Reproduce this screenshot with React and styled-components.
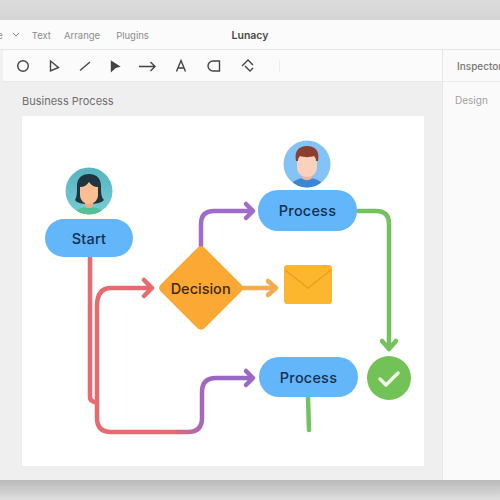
import React from 'react';
import styled, { createGlobalStyle } from 'styled-components';

const GlobalStyle = createGlobalStyle`
  html, body {
    margin: 0;
    padding: 0;
    width: 500px;
    height: 500px;
    overflow: hidden;
    background: #d8d8d8;
    font-family: Inter, "Liberation Sans", sans-serif;
  }
`;

const Page = styled.div`
  width: 500px;
  height: 500px;
  display: flex;
  flex-direction: column;
  overflow: hidden;
`;

const TopBand = styled.div`
  height: 20px;
  flex: none;
  background: linear-gradient(#dcdcdc, #d4d4d4);
`;

const BottomBand = styled.div`
  height: 20px;
  flex: none;
  background: linear-gradient(#b9b9b9, #dedede);
`;

const Window = styled.div`
  height: 460px;
  flex: none;
  display: flex;
  flex-direction: column;
  background: #fbfbfb;
`;

const MenuBar = styled.div`
  height: 28px;
  padding-top: 1px;
  flex: none;
  position: relative;
  display: flex;
  align-items: center;
  border-bottom: 1px solid #e6e6e6;
  font-size: 9.5px;
  color: #8b8b8b;
`;

const MenuList = styled.div`
  display: flex;
  align-items: center;
  margin-left: -13px;
`;

const MenuItem = styled.span`
  margin-right: ${(p) => p.$gap || 13}px;
`;

const Chevron = styled.svg`
  width: 8px;
  height: 6px;
  margin-right: 12px;
  fill: none;
  stroke: #8b8b8b;
  stroke-width: 1;
`;

const Title = styled.span`
  position: absolute;
  left: 0;
  right: 0;
  text-align: center;
  font-size: 10.5px;
  font-weight: 600;
  color: #4a4a4a;
`;

const Body = styled.div`
  flex: 1;
  min-height: 0;
  display: flex;
`;

const Main = styled.div`
  width: 442px;
  flex: none;
  display: flex;
  flex-direction: column;
`;

const Toolbar = styled.div`
  height: 31px;
  flex: none;
  display: flex;
  align-items: center;
  gap: 11.5px;
  padding-left: 10px;
  border-bottom: 1px solid #e9e9e9;
  border-left: 3px solid #f1f1f1;
`;

const Tool = styled.svg`
  width: ${(p) => p.$w || 20}px;
  height: 20px;
  flex: none;
  fill: none;
  stroke: #444;
  stroke-width: 1.4;
`;

const ToolDivider = styled.div`
  width: 1px;
  height: 12px;
  margin-left: 12px;
  background: #ececec;
`;

const Canvas = styled.div`
  flex: 1;
  min-height: 0;
  background: #efefef;
  padding: 12px 18px 13px 22px;
  display: flex;
  flex-direction: column;
  gap: 8px;
`;

const CanvasLabel = styled.div`
  font-size: 11px;
  line-height: 14px;
  color: #6e6e6e;
`;

const Paper = styled.div`
  position: relative;
  width: 402px;
  height: 350px;
  flex: none;
  background: #fff;
`;

const Wires = styled.svg`
  position: absolute;
  inset: 0;
  width: 402px;
  height: 350px;
  fill: none;
`;

const Pill = styled.div`
  position: absolute;
  left: ${(p) => p.$x}px;
  top: ${(p) => p.$y}px;
  width: ${(p) => p.$w}px;
  height: ${(p) => p.$h}px;
  display: flex;
  align-items: center;
  justify-content: center;
  border-radius: 20px;
  background: #64b6fb;
  color: #12304f;
  font-size: 14.5px;
  font-weight: 500;
  letter-spacing: 0.2px;
`;

const Diamond = styled.div`
  position: absolute;
  left: 148px;
  top: 141px;
  width: 62px;
  height: 62px;
  display: flex;
  align-items: center;
  justify-content: center;
  border-radius: 5px;
  background: #fba834;
  transform: rotate(45deg);
`;

const DiamondLabel = styled.span`
  transform: rotate(-45deg);
  color: #40290f;
  font-size: 14.5px;
  font-weight: 500;
`;

const Glyph = styled.svg`
  position: absolute;
  left: ${(p) => p.$x}px;
  top: ${(p) => p.$y}px;
  width: ${(p) => p.$w}px;
  height: ${(p) => p.$h}px;
`;

const Inspector = styled.aside`
  flex: 1;
  display: flex;
  flex-direction: column;
  border-left: 1px solid #e8e8e8;
  background: #fafafa;
`;

const InspectorHead = styled.div`
  height: 31px;
  flex: none;
  display: flex;
  align-items: center;
  padding-left: 14px;
  border-bottom: 1px solid #ebebeb;
  font-size: 10px;
  font-weight: 500;
  color: #777;
  white-space: nowrap;
`;

const InspectorLabel = styled.div`
  padding: 12px 0 0 12px;
  font-size: 10px;
  color: #a2a2a2;
`;

const Woman = (
  <Glyph $x={43} $y={51} $w={48} $h={48} viewBox="0 0 48 48">
    <defs>
      <clipPath id="womanClip"><circle cx="24" cy="24" r="23.5" /></clipPath>
      <linearGradient id="womanBg" x1="0" y1="0" x2="0" y2="1">
        <stop offset="0" stopColor="#56b3bf" />
        <stop offset="1" stopColor="#78cdd6" />
      </linearGradient>
    </defs>
    <g clipPath="url(#womanClip)">
      <rect width="48" height="48" fill="url(#womanBg)" />
      <path d="M9 48c1-6 8-8 15-8s14 2 15 8z" fill="#55c096" />
      <path d="M10 33c2-3 2-8 2-14C12 11 17 7 24 7s12 4 12 12c0 6 0 11 3 14-3 3-8 4-15 4s-12-1-14-4z" fill="#1f3540" />
      <rect x="20" y="30" width="8" height="11" rx="3" fill="#f0ab85" />
      <path d="M15 20c4 0 7-2 9-5 2 3 5 5 9 5v8c0 5-4 9-9 9s-9-4-9-9z" fill="#fbbd92" />
    </g>
  </Glyph>
);

const Man = (
  <Glyph $x={261} $y={24} $w={48} $h={48} viewBox="0 0 48 48">
    <defs>
      <clipPath id="manClip"><circle cx="24" cy="24" r="23.5" /></clipPath>
    </defs>
    <g clipPath="url(#manClip)">
      <rect width="48" height="48" fill="#84c3f5" />
      <path d="M7 48c1-7 8-10 17-10s16 3 17 10z" fill="#3f86d0" />
      <path d="M19 29h10v9c-2 3-8 3-10 0z" fill="#f0b5a0" />
      <path d="M14 14h20v13c0 6-4 10-10 10s-10-4-10-10z" fill="#fbd0bd" />
      <path d="M13 21C11 11 16 6 24 6s13 5 11 15h-2c0-2-.5-3.5-2-5-4 1.5-10 1.5-14 0-1.5 1.5-2 3-2 5z" fill="#8b3f2f" />
    </g>
  </Glyph>
);

const App = () => (
  <Page>
    <GlobalStyle />
    <TopBand />
    <Window>
      <MenuBar>
        <MenuList>
          <MenuItem $gap={9}>File</MenuItem>
          <Chevron viewBox="0 0 8 6"><path d="M1 1l3 3 3-3" /></Chevron>
          <MenuItem>Text</MenuItem>
          <MenuItem $gap={16}>Arrange</MenuItem>
          <MenuItem>Plugins</MenuItem>
        </MenuList>
        <Title>Lunacy</Title>
      </MenuBar>
      <Body>
        <Main>
          <Toolbar>
            <Tool viewBox="0 0 20 20"><circle cx="10" cy="10" r="5.3" /></Tool>
            <Tool viewBox="0 0 20 20"><path d="M5.5 5l8 6.5-8 3.5z" /></Tool>
            <Tool viewBox="0 0 20 20"><path d="M4 14.5L14 6" /></Tool>
            <Tool viewBox="0 0 20 20"><path d="M3.5 5.5l7.5 5-3.5.8-4 3.7z" fill="#444" /></Tool>
            <Tool $w={22} viewBox="0 0 22 20"><path d="M0 10.5h16M11.5 6l4.5 4.5-4.5 4.5" /></Tool>
            <Tool viewBox="0 0 20 20"><path d="M3.5 15.5L8 4.5l4.5 11M5.2 12h5.6" /></Tool>
            <Tool viewBox="0 0 20 20"><path d="M16 5H9a5 5 0 0 0 0 10h6.5V5" /></Tool>
            <Tool viewBox="0 0 20 20"><path d="M6 10l6-6 5 5M9 10l5 5 3-3" /></Tool>
            <ToolDivider />
          </Toolbar>
          <Canvas>
            <CanvasLabel>Business Process</CanvasLabel>
            <Paper>
              <Wires viewBox="0 0 402 350">
                <defs>
                  <linearGradient id="redPurple" gradientUnits="userSpaceOnUse" x1="150" y1="0" x2="185" y2="0">
                    <stop offset="0" stopColor="#e86a70" />
                    <stop offset="1" stopColor="#9a68c4" />
                  </linearGradient>
                </defs>
                <g strokeWidth="4.5" strokeLinecap="round" strokeLinejoin="round">
                  <path d="M68 141V281q0 4 5 5" stroke="#e86a70" />
                  <path d="M75 190q0-18 14-18H130M122 164l8 8-8 8" stroke="#e86a70" />
                  <path d="M75 190V302q0 14 14 14H166q14 0 14-14V276q0-14 14-14H230M224 255l7 7-7 7" stroke="url(#redPurple)" />
                  <path d="M179 130V108q0-13 13-13H230M224 88l7 7-7 7" stroke="#a06cca" />
                  <path d="M221 172H252M246 165l8 7-8 7" stroke="#f1ac50" />
                  <path d="M336 95H354q13 0 13 13V232M360 225l7 8 7-8" stroke="#74c25d" />
                  <path d="M286 281l1 33" stroke="#74c25d" />
                </g>
              </Wires>
              {Woman}
              {Man}
              <Pill $x={23} $y={103} $w={88} $h={38}>Start</Pill>
              <Pill $x={236} $y={74} $w={99} $h={41}>Process</Pill>
              <Pill $x={237} $y={241} $w={99} $h={40}>Process</Pill>
              <Diamond>
                <DiamondLabel>Decision</DiamondLabel>
              </Diamond>
              <Glyph $x={262} $y={149} $w={48} $h={39} viewBox="0 0 48 39">
                <rect width="48" height="39" rx="3" fill="#fdb72f" />
                <path d="M1 5l23 18L47 5" fill="none" stroke="#ee9d22" strokeWidth="1.5" />
              </Glyph>
              <Glyph $x={345} $y={240} $w={44} $h={44} viewBox="0 0 44 44">
                <circle cx="22" cy="22" r="22" fill="#72c257" />
                <path d="M13 23l6 6 12-12" fill="none" stroke="#f2fbe9" strokeWidth="3.4" strokeLinecap="round" strokeLinejoin="round" />
              </Glyph>
            </Paper>
          </Canvas>
        </Main>
        <Inspector>
          <InspectorHead>Inspector</InspectorHead>
          <InspectorLabel>Design</InspectorLabel>
        </Inspector>
      </Body>
    </Window>
    <BottomBand />
  </Page>
);

export default App;
